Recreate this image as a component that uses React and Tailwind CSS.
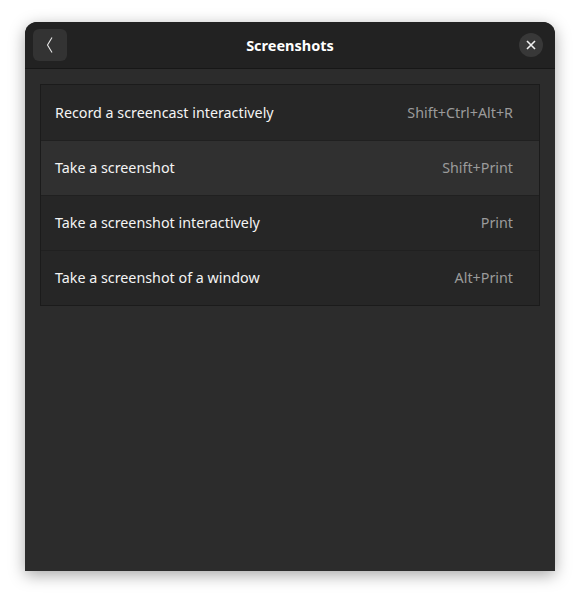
import React from 'react';

const shortcuts = [
    { label: 'Record a screencast interactively', accel: 'Shift+Ctrl+Alt+R' },
    { label: 'Take a screenshot', accel: 'Shift+Print', hover: true },
    { label: 'Take a screenshot interactively', accel: 'Print' },
    { label: 'Take a screenshot of a window', accel: 'Alt+Print' },
];

export default function App() {
    return (
        <div className="w-[580px] h-[599px] bg-white pt-[22px] pl-[25px] font-['Noto_Sans',sans-serif]">
            <div className="w-[530px] h-[549px] flex flex-col bg-[#2c2c2c] rounded-t-[12px] shadow-[0_4px_16px_rgba(0,0,0,0.35)]">
                {/* Header bar */}
                <div className="h-[47px] grid grid-cols-[1fr_auto_1fr] items-center px-[8px] bg-[#222222] rounded-t-[12px] border-b border-[#171717]">
                    <button className="justify-self-start w-[34px] h-[32px] rounded-[6px] bg-[#333333] flex items-center justify-center">
                        <svg width="16" height="16" viewBox="0 0 16 16" fill="none">
                            <path d="M10 0.5 L5.5 8 L10 15.5" stroke="#e8e8e8" strokeWidth="1.1" />
                        </svg>
                    </button>
                    <span className="text-[14.5px] font-bold text-white pt-[2px]">Screenshots</span>
                    <button className="justify-self-end w-[24px] h-[24px] mr-[4px] rounded-full bg-[#383838] flex items-center justify-center">
                        <svg width="10" height="10" viewBox="0 0 10 10" fill="none">
                            <path d="M1 1 L9 9 M9 1 L1 9" stroke="#f0f0f0" strokeWidth="1.6" />
                        </svg>
                    </button>
                </div>

                {/* Shortcut list */}
                <div className="px-[15px] pt-[15px]">
                    <div className="border border-[#1b1b1b] bg-[#262626]">
                        {shortcuts.map((s, i) => (
                            <div
                                key={s.label}
                                className={`h-[55px] flex items-center justify-between pl-[14px] pr-[26px] ${i > 0 ? 'border-t border-[#202020]' : ''} ${s.hover ? 'bg-[#303030]' : ''}`}
                            >
                                <span className="text-[14.3px] text-[#f4f4f4]">{s.label}</span>
                                <span className="text-[14.3px] text-[#9b9b9b]">{s.accel}</span>
                            </div>
                        ))}
                    </div>
                </div>
            </div>
        </div>
    );
}
